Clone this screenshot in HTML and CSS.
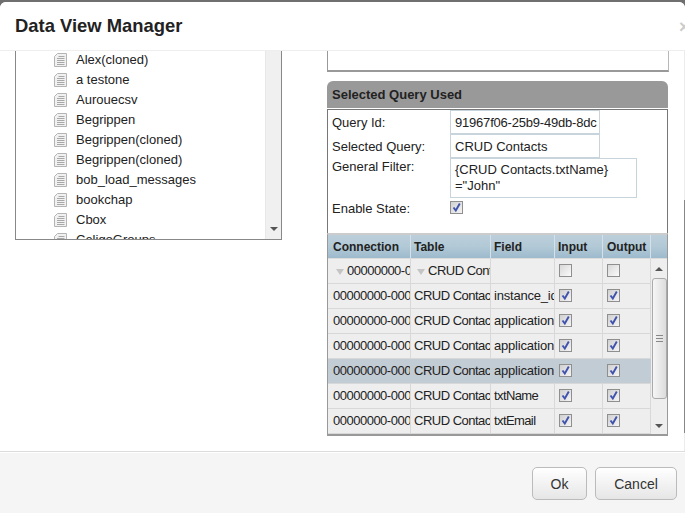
FILE: index.html
```html
<!DOCTYPE html>
<html lang="en">
<head>
<meta charset="utf-8">
<title>Data View Manager</title>
<link rel="stylesheet" href="styles.css">
</head>
<body>
<div class="modal">
  <header class="modal-head">
    <h1>Data View Manager</h1>
    <span class="close">×</span>
  </header>
  <main class="modal-body">
    <section class="tree">
      <ul class="tree-list">
        <li><svg class="doc"><use href="#doc"/></svg>Alex(cloned)</li>
        <li><svg class="doc"><use href="#doc"/></svg>a testone</li>
        <li><svg class="doc"><use href="#doc"/></svg>Aurouecsv</li>
        <li><svg class="doc"><use href="#doc"/></svg>Begrippen</li>
        <li><svg class="doc"><use href="#doc"/></svg>Begrippen(cloned)</li>
        <li><svg class="doc"><use href="#doc"/></svg>Begrippen(cloned)</li>
        <li><svg class="doc"><use href="#doc"/></svg>bob_load_messages</li>
        <li><svg class="doc"><use href="#doc"/></svg>bookchap</li>
        <li><svg class="doc"><use href="#doc"/></svg>Cbox</li>
        <li><svg class="doc"><use href="#doc"/></svg>CeligoGroups</li>
      </ul>
      <div class="tree-scroll"><span class="arrow-down"></span></div>
    </section>
    <section class="right">
      <div class="top-box"></div>
      <div class="panel">
        <div class="panel-title">Selected Query Used</div>
        <div class="panel-content">
          <div class="form">
            <label>Query Id:</label><div class="field w1 tight">91967f06-25b9-49db-8dc</div>
            <label>Selected Query:</label><div class="field w1">CRUD Contacts</div>
            <label>General Filter:</label><div class="field w2">{CRUD Contacts.txtName}<br>="John"</div>
            <label>Enable State:</label><div class="form-check"><span class="cb on"><svg class="tick"><use href="#tick"/></svg></span></div>
          </div>
          <div class="grid">
            <div class="grid-head">
              <span class="c1">Connection</span><span class="c2">Table</span><span class="c3">Field</span><span class="c4">Input</span><span class="c5">Output</span><span class="c6"></span>
            </div>
            <div class="grid-wrap">
              <div class="rows">
                <div class="row">
                  <span class="c1 group"><i class="tri"></i><b>00000000-0000</b></span><span class="c2 group"><i class="tri"></i><b>CRUD Contacts</b></span><span class="c3"></span><span class="c4"><span class="cb"></span></span><span class="c5"><span class="cb"></span></span>
                </div>
                <div class="row">
                  <span class="c1">00000000-0000-0000</span><span class="c2">CRUD Contacts</span><span class="c3">instance_id</span><span class="c4"><span class="cb on"><svg class="tick"><use href="#tick"/></svg></span></span><span class="c5"><span class="cb on"><svg class="tick"><use href="#tick"/></svg></span></span>
                </div>
                <div class="row">
                  <span class="c1">00000000-0000-0000</span><span class="c2">CRUD Contacts</span><span class="c3">application</span><span class="c4"><span class="cb on"><svg class="tick"><use href="#tick"/></svg></span></span><span class="c5"><span class="cb on"><svg class="tick"><use href="#tick"/></svg></span></span>
                </div>
                <div class="row">
                  <span class="c1">00000000-0000-0000</span><span class="c2">CRUD Contacts</span><span class="c3">application</span><span class="c4"><span class="cb on"><svg class="tick"><use href="#tick"/></svg></span></span><span class="c5"><span class="cb on"><svg class="tick"><use href="#tick"/></svg></span></span>
                </div>
                <div class="row selected">
                  <span class="c1">00000000-0000-0000</span><span class="c2">CRUD Contacts</span><span class="c3">application</span><span class="c4"><span class="cb on"><svg class="tick"><use href="#tick"/></svg></span></span><span class="c5"><span class="cb on"><svg class="tick"><use href="#tick"/></svg></span></span>
                </div>
                <div class="row">
                  <span class="c1">00000000-0000-0000</span><span class="c2">CRUD Contacts</span><span class="c3 narrow">txtName</span><span class="c4"><span class="cb on"><svg class="tick"><use href="#tick"/></svg></span></span><span class="c5"><span class="cb on"><svg class="tick"><use href="#tick"/></svg></span></span>
                </div>
                <div class="row">
                  <span class="c1">00000000-0000-0000</span><span class="c2">CRUD Contacts</span><span class="c3 narrow">txtEmail</span><span class="c4"><span class="cb on"><svg class="tick"><use href="#tick"/></svg></span></span><span class="c5"><span class="cb on"><svg class="tick"><use href="#tick"/></svg></span></span>
                </div>
              </div>
              <div class="grid-scroll">
                <span class="arrow-up"></span>
                <div class="thumb"><span class="grip"></span></div>
                <span class="arrow-down"></span>
              </div>
            </div>
          </div>
        </div>
      </div>
    </section>
  </main>
  <footer class="modal-foot">
    <button class="btn ok">Ok</button>
    <button class="btn cancel">Cancel</button>
  </footer>
</div>
<svg class="defs" width="0" height="0">
  <symbol id="doc" viewBox="0 0 13 14">
    <path d="M3.5.5H12.5V13.500H.5V3.500Z" fill="#f1f1f1" stroke="#b4b4b4"/>
    <path d="M3 5.500H10.500M3 7.500H10.500M3 9.500H10.500M3 11.500H10.500M4.500 3.500H10.500" stroke="#a8a8a8" fill="none"/>
  </symbol>
  <symbol id="tick" viewBox="0 0 11 11">
    <path d="M2.500 5.500L4.800 8.500L8.800 1.500" stroke="#3f52ad" stroke-width="1.900" fill="none"/>
  </symbol>
</svg>
</body>
</html>
```

FILE: styles.css
```css
* { box-sizing: border-box; }
html, body { margin: 0; height: 100%; }
body {
  width: 685px;
  height: 513px;
  overflow: hidden;
  background: #6f6f6f;
  padding-top: 2px;
  font-family: "Liberation Sans", Arial, sans-serif;
  font-size: 13px;
  color: #222;
}
.defs { display: block; }
.modal {
  width: 685px;
  height: 511px;
  background: #fff;
  border-radius: 6px 6px 0 0;
  display: flex;
  flex-direction: column;
  overflow: hidden;
}
.modal-head {
  height: 49px;
  flex: none;
  border-bottom: 1px solid #eee;
  display: flex;
  align-items: center;
  justify-content: space-between;
  padding: 0 0 0 15px;
  background: #fff;
}
.modal-head h1 {
  margin: 0;
  font-size: 18.4px;
  font-weight: bold;
  color: #222;
}
.close {
  font-size: 18px;
  font-weight: bold;
  color: #ccc;
  width: 6px;
  overflow: hidden;
  line-height: 20px;
  margin-top: 2px;
}
.modal-body {
  height: 400px;
  flex: none;
  display: flex;
  align-items: flex-start;
  padding-left: 15px;
  overflow: hidden;
  border-right: 1px solid #e4e4e4;
  border-image: linear-gradient(#ececec 149px, #888 149px, #888 381px, #ececec 381px) 1;
}
.tree {
  width: 267px;
  height: 189px;
  flex: none;
  border: 1px solid #888;
  border-top: 0;
  display: flex;
  overflow: hidden;
}
.tree-list {
  list-style: none;
  margin: -2px 0 0;
  padding: 0 0 0 38px;
  flex: 1;
  font-size: 13px;
  overflow: hidden;
}
.tree-list li {
  height: 20px;
  display: flex;
  align-items: center;
  color: #222;
}
.doc { width: 13px; height: 14px; margin: 2px 9px 0 0; flex: none; }
.tree-scroll {
  width: 16px;
  flex: none;
  background: #f0f0f0;
  border-left: 1px solid #e8e8e8;
  display: flex;
  flex-direction: column;
  justify-content: flex-end;
  align-items: center;
  padding-bottom: 8px;
}
.arrow-down, .arrow-up {
  width: 0;
  height: 0;
  border-left: 4px solid transparent;
  border-right: 4px solid transparent;
  display: block;
  flex: none;
}
.arrow-down { border-top: 4px solid #555; }
.arrow-up { border-bottom: 4px solid #555; }
.right {
  width: 341px;
  flex: none;
  margin-left: 45px;
  height: 100%;
  display: flex;
  flex-direction: column;
  gap: 9px;
}
.top-box {
  height: 21px;
  width: 342px;
  border: 1px solid #b8b8b8;
  border-left-color: #999;
  border-top: 0;
  border-bottom: 2px solid #999;
  flex: none;
}
.panel { flex: none; }
.panel-title {
  height: 27px;
  background: #999;
  border-radius: 6px 6px 0 0;
  font-weight: bold;
  font-size: 13px;
  line-height: 27px;
  padding-left: 5px;
  color: #222;
  width: 341px;
}
.panel-content {
  margin-top: 1px;
  width: 341px;
  border: 1px solid #777;
  border-bottom: 0;
  height: 326px;
}
.form {
  display: grid;
  grid-template-columns: 118px 1fr;
  grid-template-rows: 24px 24px 40px 35px;
  padding: 0 0 0 4px;
  height: 123px;
}
.form label { padding-top: 6px; line-height: 14px; }
.form label:nth-of-type(3) { padding-top: 2px; }
.form label:nth-of-type(4) { padding-top: 4px; }
.field {
  border: 1px solid #c8d4dc;
  padding: 0 0 0 4px;
  height: 24px;
  line-height: 23px;
  white-space: nowrap;
  overflow: hidden;
  color: #222;
}
.tight { letter-spacing: -0.2px; }
.w1 { width: 150px; }
.w2 { width: 187px; height: 40px; line-height: 16px; padding-top: 3px; }
.form-check { padding-top: 3px; }
.cb {
  width: 13px;
  height: 13px;
  display: block;
  border: 1px solid #8f8f8f;
  background: linear-gradient(135deg, #d8d8d8, #fbfbfb);
  overflow: hidden;
}
.cb.on { background: linear-gradient(135deg, #d0d0d0, #f4f4f4); }
.tick { display: block; width: 11px; height: 11px; }
.grid {
  width: 341px;
  margin-left: -1px;
  border: 1px solid #999;
  border-top: 2px solid #ccc;
  border-bottom: 2px solid #999;
  height: 203px;
  overflow: hidden;
}
.grid-head {
  height: 24px;
  display: flex;
  background: linear-gradient(#bccfdb, #b2c9d6 50%, #9dbacd);
  font-weight: bold;
  font-size: 12px;
  line-height: 24px;
  border-bottom: 1px solid #dcdcdc;
}
.grid-head span {
  padding-left: 3px;
  border-right: 1px solid #d5e0e7;
  flex: none;
}
.grid-head .c1 { padding-left: 5px; }
.grid-head .c5 { padding-left: 4px; }
.c1 { width: 83px; }
.c2 { width: 80px; }
.c3 { width: 64px; }
.c4 { width: 48px; }
.c5 { width: 48px; }
.c6 { width: 16px; border-right: 0 !important; }
.grid-wrap { display: flex; height: 175px; }
.rows { width: 323px; flex: none; overflow: hidden; }
.row {
  height: 25px;
  display: flex;
  background: #eee;
  border-bottom: 1px solid #d8d8d8;
  line-height: 24px;
  font-size: 13px;
}
.row > span {
  flex: none;
  border-right: 1px solid #d8d8d8;
  white-space: nowrap;
  overflow: hidden;
  padding-left: 3px;
}
.row > .c1 { padding-left: 5px; letter-spacing: -0.5px; }
.row > .c2 { letter-spacing: -0.5px; }
.row > .c3 { letter-spacing: -0.2px; }
.row > .narrow { letter-spacing: -0.6px; }
.row > .c4, .row > .c5 { padding: 5px 0 0 4px; }
.row.selected { background: #c2ccd4; }
.row.selected > span { border-right-color: #c2ccd4; }
.row > .group { display: flex; align-items: center; padding-left: 3px; }
.group b { font-weight: normal; }
.tri {
  flex: none;
  width: 0;
  height: 0;
  margin: 1px 3px 0 3px;
  border-left: 4px solid transparent;
  border-right: 4px solid transparent;
  border-top: 6px solid #c4c4c4;
}
.row > .group.c1 { padding-left: 5px; }
.grid-scroll {
  width: 16px;
  flex: none;
  background: #eee;
  display: flex;
  flex-direction: column;
  align-items: center;
  padding: 8px 0 6px;
}
.thumb {
  width: 15px;
  height: 121px;
  flex: none;
  margin-top: 7px;
  background: linear-gradient(90deg, #f6f6f6, #dcdcdc);
  border: 1px solid #aaa;
  border-radius: 3px;
  display: flex;
  align-items: center;
  justify-content: center;
}
.grid-scroll .arrow-down { margin-top: auto; }
.grip {
  width: 7px;
  height: 7px;
  border-top: 1px solid #888;
  border-bottom: 1px solid #888;
  background: linear-gradient(#888, #888) center / 100% 1px no-repeat;
}
.modal-foot {
  flex: 1;
  background: #f5f5f5;
  border-top: 1px solid #ddd;
  display: flex;
  justify-content: flex-end;
  align-items: flex-start;
  gap: 8px;
  padding: 15px 8px 0 0;
  box-shadow: inset 0 1px 0 #fff;
}
.btn {
  height: 33px;
  border: 1px solid #bbb;
  border-radius: 5px;
  background: linear-gradient(#fff, #e6e6e6);
  font: 14px "Liberation Sans", Arial, sans-serif;
  color: #333;
  padding: 0;
}
.ok { width: 55px; }
.cancel { width: 82px; }
```
